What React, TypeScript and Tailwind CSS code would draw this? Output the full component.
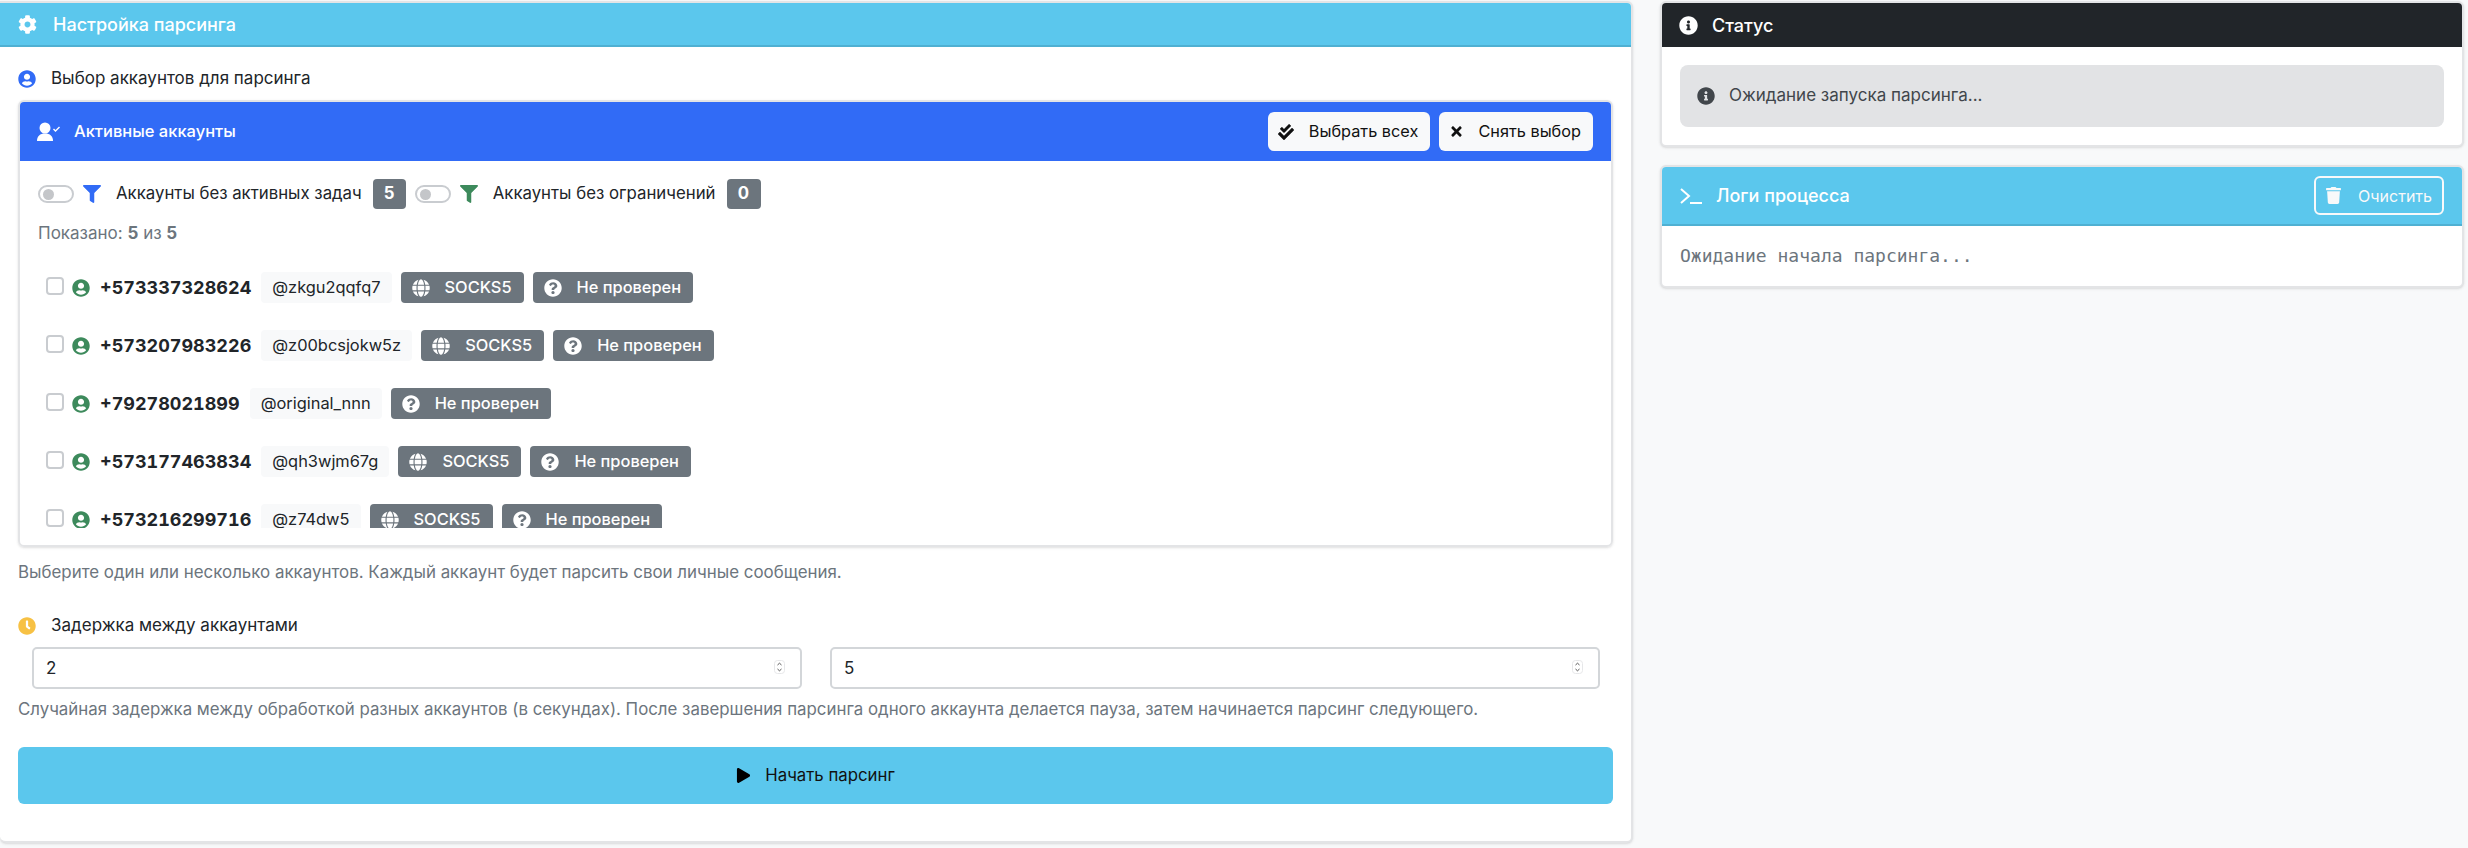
import {
  FaCheckDouble,
  FaClock,
  FaCog,
  FaFilter,
  FaGlobe,
  FaInfoCircle,
  FaPlay,
  FaQuestionCircle,
  FaTimes,
  FaTrash,
  FaUserCircle,
} from "react-icons/fa";

const accounts = [
  { phone: "+573337328624", handle: "@zkgu2qqfq7", proxy: true },
  { phone: "+573207983226", handle: "@z00bcsjokw5z", proxy: true },
  { phone: "+79278021899", handle: "@original_nnn", proxy: false },
  { phone: "+573177463834", handle: "@qh3wjm67g", proxy: true },
  { phone: "+573216299716", handle: "@z74dw5", proxy: true },
];

function Switch() {
  return (
    <span className="flex h-[18px] w-[36px] shrink-0 items-center rounded-full border-2 border-[#c9ccd0] bg-white pl-[3px]">
      <span className="h-[11px] w-[11px] rounded-full bg-[#c4c6c9]" />
    </span>
  );
}

function Badge({ children }: { children: React.ReactNode }) {
  return (
    <span className="flex h-[31px] items-center gap-[15px] rounded-[4px] bg-[#6c757d] pl-[11px] pr-[12px] text-[16.4px] font-medium text-white">
      {children}
    </span>
  );
}

function AccountRow({ phone, handle, proxy }: (typeof accounts)[number]) {
  return (
    <div className="mb-[27px] flex h-[31px] items-center">
      <input
        type="checkbox"
        className="mb-[4px] h-[18px] w-[18px] appearance-none rounded-[4px] border-2 border-[#c9ccd0] bg-white"
      />
      <FaUserCircle className="ml-[8px] text-[18px] text-[#3d8a5c]" />
      <span className="ml-[10px] text-[18px] font-bold tabular-nums text-[#212529]">{phone}</span>
      <span className="ml-[10px] flex h-[31px] items-center rounded-[4px] bg-[#f8f9fa] px-[11px] text-[16.4px] text-[#212529]">
        {handle}
      </span>
      {proxy && (
        <span className="ml-[9px]">
          <Badge>
            <FaGlobe className="text-[18px]" />
            SOCKS5
          </Badge>
        </span>
      )}
      <span className="ml-[9px]">
        <Badge>
          <FaQuestionCircle className="text-[18px]" />
          Не проверен
        </Badge>
      </span>
    </div>
  );
}

function DelayInput({ value }: { value: number }) {
  return (
    <div className="relative w-[770px]">
      <input
        type="number"
        defaultValue={value}
        className="h-[42px] w-full rounded-[5px] border-2 border-[#d3d6d9] bg-white px-[12px] text-[17px] [appearance:textfield] [&::-webkit-inner-spin-button]:appearance-none"
      />
      {/* маленький спиннер как в Safari */}
      <svg viewBox="0 0 11 14" className="absolute right-[17px] top-[13px] h-[14px] w-[11px]" fill="none">
        <rect x="0.5" y="0.5" width="10" height="13" rx="3" stroke="#e6e7e9" />
        <path d="M3.5 5 L5.5 3.2 L7.5 5 M3.5 9 L5.5 10.8 L7.5 9" stroke="#555" />
      </svg>
    </div>
  );
}

export default function App() {
  return (
    <div className="flex min-h-[848px] items-start gap-[27px] bg-[#f8f9fa] pt-[1px] pr-[4px] font-['Inter','Noto_Sans',sans-serif] text-[17px] text-[#212529]">
      {/* Настройка */}
      <div className="h-[842px] w-[1633px] shrink-0 overflow-hidden rounded-r-[6px] rounded-bl-[6px] border-2 border-l-0 border-[#e3e4e6] bg-white shadow-sm">
        <div className="flex h-[44px] items-center gap-[16px] border-b-2 border-[#4fb0d2] bg-[#5bc7ed] pl-[18px] text-[18px] font-medium text-white">
          <FaCog className="text-[19px]" />
          Настройка парсинга
        </div>

        <div className="px-[18px]">
          <div className="mt-[20px] flex h-[24px] items-center gap-[15px]">
            <FaUserCircle className="text-[18px] text-[#316bf6]" />
            Выбор аккаунтов для парсинга
          </div>

          <div className="mt-[9px] w-[1595px] overflow-hidden rounded-[6px] border-2 border-[#e3e4e6] shadow-sm">
            <div className="flex h-[59px] items-center justify-between bg-[#316bf6] pl-[17px] pr-[18px] text-white">
              <div className="flex items-center gap-[14px] text-[16.5px] font-medium">
                <svg viewBox="0 0 23 19" className="h-[19px] w-[23px]" fill="currentColor">
                  <circle cx="8" cy="6" r="5.5" />
                  <path d="M0 19 C0 14 3 11.5 8 11.5 S16 14 16 19 Z" />
                  <path d="M16.5 7 L18.5 9 L22.5 5" fill="none" stroke="currentColor" strokeWidth="1.4" />
                </svg>
                Активные аккаунты
              </div>
              <div className="flex gap-[9px] text-[16.3px] text-[#111]">
                <button className="flex h-[39px] items-center gap-[15px] rounded-[6px] bg-[#f8f9fa] pl-[10px] pr-[12px]">
                  <FaCheckDouble className="text-[16px]" />
                  Выбрать всех
                </button>
                <button className="flex h-[39px] items-center gap-[14px] rounded-[6px] bg-[#f8f9fa] pl-[10px] pr-[12px]">
                  <FaTimes className="text-[15px]" />
                  Снять выбор
                </button>
              </div>
            </div>

            <div className="px-[18px] pt-[18px] pb-[17px]">
              <div className="flex h-[30px] items-center text-[16.8px]">
                <Switch />
                <FaFilter className="ml-[9px] text-[18px] text-[#316bf6]" />
                <span className="ml-[15px]">Аккаунты без активных задач</span>
                <span className="ml-[11px] flex h-[30px] w-[33px] items-center justify-center rounded-[4px] bg-[#6c757d] font-bold text-white">
                  5
                </span>
                <span className="ml-[9px]">
                  <Switch />
                </span>
                <FaFilter className="ml-[9px] text-[18px] text-[#3d8a5c]" />
                <span className="ml-[15px]">Аккаунты без ограничений</span>
                <span className="ml-[11px] flex h-[30px] w-[34px] items-center justify-center rounded-[4px] bg-[#6c757d] font-bold text-white">
                  0
                </span>
              </div>
              <div className="mt-[13px] leading-[22px] text-[#6c757d]">
                Показано: <b>5</b> из <b>5</b>
              </div>
              <div className="mt-[10px] h-[274px] overflow-hidden pt-[18px] pl-[8px]">
                {accounts.map((account) => (
                  <AccountRow key={account.phone} {...account} />
                ))}
              </div>
            </div>
          </div>

          <p className="mt-[14px] text-[16.9px] leading-[22px] text-[#6c757d]">
            Выберите один или несколько аккаунтов. Каждый аккаунт будет парсить свои личные сообщения.
          </p>

          <div className="mt-[31px] flex h-[24px] items-center gap-[15px]">
            <FaClock className="text-[18px] text-[#f7c144]" />
            Задержка между аккаунтами
          </div>

          <div className="mt-[9px] flex gap-[28px] pl-[14px]">
            <DelayInput value={2} />
            <DelayInput value={5} />
          </div>

          <p className="mt-[9px] text-[16.85px] leading-[22px] text-[#6c757d]">
            Случайная задержка между обработкой разных аккаунтов (в секундах). После завершения парсинга одного аккаунта делается пауза, затем начинается парсинг следующего.
          </p>

          <button className="mt-[27px] flex h-[57px] w-[1595px] items-center justify-center gap-[14px] rounded-[6px] bg-[#5bc7ed] text-[16.8px] text-[#111]">
            <FaPlay className="text-[15px] text-black" />
            Начать парсинг
          </button>
        </div>
      </div>

      {/* Статус и логи */}
      <div className="flex flex-1 flex-col gap-[18px]">
        <div className="overflow-hidden rounded-[6px] border-2 border-[#e3e4e6] bg-white shadow-sm">
          <div className="flex h-[44px] items-center gap-[14px] bg-[#212529] pl-[17px] text-[18px] font-medium text-white">
            <FaInfoCircle className="text-[19px]" />
            Статус
          </div>
          <div className="p-[18px]">
            <div className="flex h-[62px] items-center gap-[14px] rounded-[8px] bg-[#e2e3e5] pl-[17px] text-[#41464b]">
              <FaInfoCircle className="text-[18px]" />
              Ожидание запуска парсинга...
            </div>
          </div>
        </div>

        <div className="overflow-hidden rounded-[6px] border-2 border-[#e3e4e6] bg-white shadow-sm">
          <div className="flex h-[59px] items-center justify-between border-b-2 border-[#4fb0d2] bg-[#5bc7ed] pl-[18px] pr-[18px] text-white">
            <div className="flex items-center gap-[14px] text-[18px] font-medium">
              <svg viewBox="0 0 22 16" className="h-[16px] w-[22px]" fill="none" stroke="currentColor" strokeWidth="2">
                <path d="M1 1 L9 8 L1 15" />
                <path d="M10 15 H22" />
              </svg>
              Логи процесса
            </div>
            <button className="flex h-[39px] items-center gap-[16px] rounded-[6px] border-2 border-[#f8f9fa] pl-[9px] pr-[10px] text-[16px] text-[#f8f9fa]">
              <FaTrash className="text-[17px]" />
              Очистить
            </button>
          </div>
          <div className="h-[60px] pl-[18px] pt-[18px] font-['DejaVu_Sans_Mono',monospace] text-[18px] leading-[24px] text-[#6c757d]">
            Ожидание начала парсинга...
          </div>
        </div>
      </div>
    </div>
  );
}
